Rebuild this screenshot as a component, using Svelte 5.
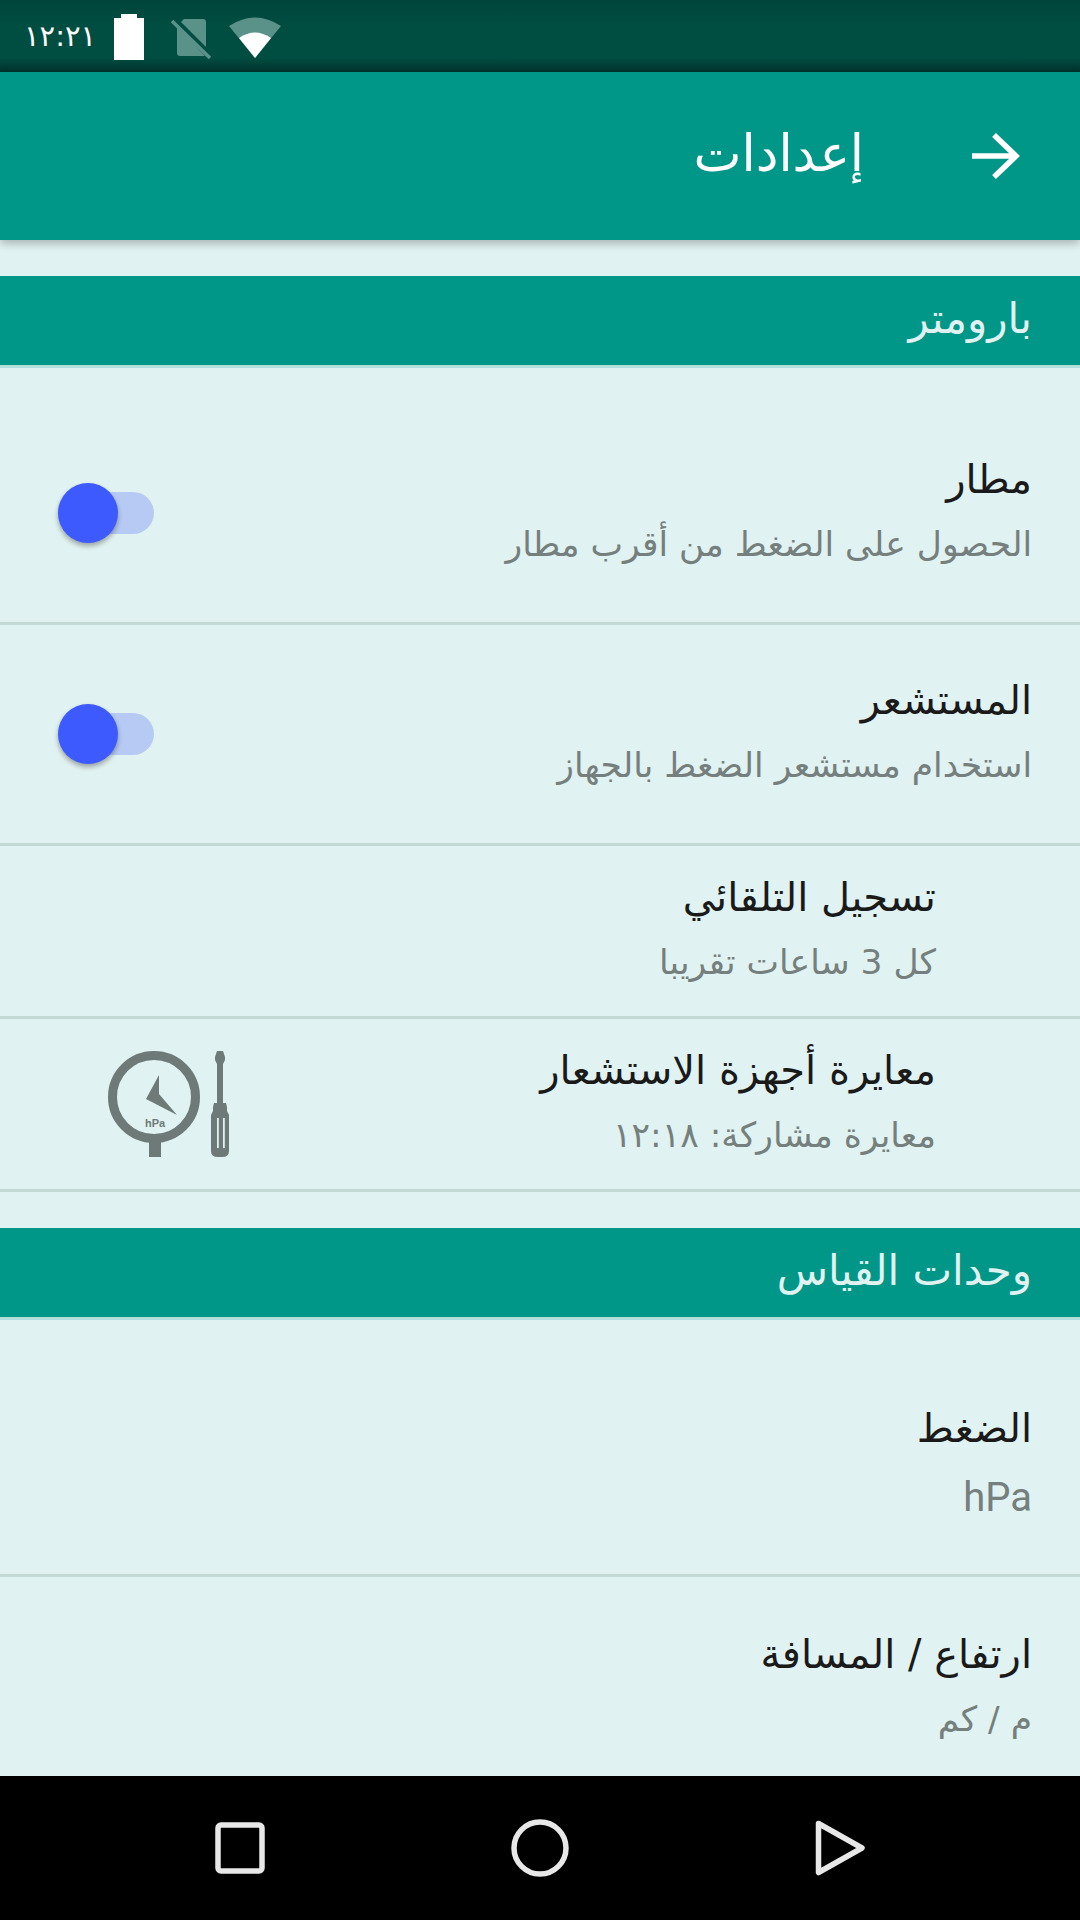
<script>
  const barometer = [
    { title: 'مطار', sub: 'الحصول على الضغط من أقرب مطار', kind: 'switch' },
    { title: 'المستشعر', sub: 'استخدام مستشعر الضغط بالجهاز', kind: 'switch' }
  ];
</script>

<div class="screen">
  <div class="status">
    <span class="time">١٢:٢١</span>
    <svg class="battery" width="30" height="46" viewBox="0 0 30 46"><path d="M7 0h16v4h7v42H0V4h7z" fill="#fff"/></svg>
    <svg class="sim" width="42" height="44" viewBox="0 0 42 44">
      <path d="M11 5l3-3h19a3 3 0 0 1 3 3v25z M7 9l28 30H10a3 3 0 0 1-3-3z" fill="#5a9189"/>
      <path d="M2 4l38 37" stroke="#5a9189" stroke-width="3.5"/>
    </svg>
    <svg class="wifi" width="52" height="44" viewBox="0 0 52 44">
      <path d="M0 10Q26-7 52 10L26 42z" fill="#5a9189"/>
      <path d="M10 22Q26 11 42 22L26 42z" fill="#fff"/>
    </svg>
  </div>

  <header class="toolbar" dir="rtl">
    <svg class="back" width="50" height="50" viewBox="0 0 50 50"><path d="M2 25h44M24 4l22 21-22 21" fill="none" stroke="#fff" stroke-width="5.5"/></svg>
    <h1>إعدادات</h1>
  </header>

  <main class="content" dir="rtl">
    <h2 class="section first">بارومتر</h2>
    {#each barometer as item}
      <div class="row tall">
        <div class="text">
          <div class="title">{item.title}</div>
          <div class="sub">{item.sub}</div>
        </div>
        <div class="switch"><span class="track"></span><span class="thumb"></span></div>
      </div>
    {/each}

    <div class="row short inset">
      <div class="text">
        <div class="title">تسجيل التلقائي</div>
        <div class="sub">كل 3 ساعات تقريبا</div>
      </div>
    </div>

    <div class="row short inset">
      <div class="text">
        <div class="title">معايرة أجهزة الاستشعار</div>
        <div class="sub">معايرة مشاركة: ١٢:١٨</div>
      </div>
      <svg class="gauge" width="180" height="150" viewBox="0 0 180 150" dir="ltr">
        <circle cx="74" cy="77" r="41.500" fill="none" stroke="#6d7a78" stroke-width="9"/>
        <rect x="69" y="122" width="12" height="15" fill="#6d7a78"/>
        <path d="M79 55L66 79 97 95 79 74z" fill="#6d7a78"/>
        <text x="75" y="107" text-anchor="middle" class="hpa">hPa</text>
        <path d="M137 31h6l2 6v3l-2 4v39h3l1 4v4l2 4v36q0 6-7 6h-4q-7 0-7-6V95l2-4v-4l1-4h3V44l-2-4v-3z" fill="#6d7a78"/>
        <path d="M137 98h1.800v30h-1.800zM143 98h1.800v30H143z" fill="#e0f2f1"/>
      </svg>
    </div>

    <h2 class="section second">وحدات القياس</h2>

    <div class="row tall">
      <div class="text">
        <div class="title">الضغط</div>
        <div class="sub latin">hPa</div>
      </div>
    </div>
    <div class="row tall last">
      <div class="text">
        <div class="title">ارتفاع / المسافة</div>
        <div class="sub">م / كم</div>
      </div>
    </div>
  </main>

  <nav class="navbar">
    <svg class="square" width="50" height="52" viewBox="0 0 50 52"><rect x="3" y="3" width="44" height="46" rx="3" fill="none" stroke="#e8e8e8" stroke-width="5.500"/></svg>
    <svg class="circle" width="58" height="58" viewBox="0 0 58 58"><circle cx="29" cy="29" r="26" fill="none" stroke="#e8e8e8" stroke-width="5.500"/></svg>
    <svg class="triangle" width="50" height="56" viewBox="0 0 50 56"><path d="M3.500 3.500L47 28 3.500 52.500z" fill="none" stroke="#e8e8e8" stroke-width="5.500" stroke-linejoin="round"/></svg>
  </nav>
</div>

<style>
  :global(body) {
    margin: 0;
    background: #e0f2f1;
  }
  .screen {
    width: 1080px;
    height: 1920px;
    display: flex;
    flex-direction: column;
    overflow: hidden;
    font-family: "DejaVu Sans", "Noto Sans", sans-serif;
    background: #e0f2f1;
  }
  .status {
    height: 72px;
    flex: none;
    display: flex;
    align-items: center;
    padding-left: 24px;
    box-sizing: border-box;
    background: linear-gradient(#00453b 0, #004d42 35%, #004d42 80%, #00332b 100%);
    color: #fff;
  }
  .time {
    font-size: 29px;
    width: 90px;
    line-height: 1;
  }
  .battery { margin-right: 26px; margin-top: 2px; }
  .sim { margin-right: 17px; margin-top: 5px; }
  .wifi { margin-top: 4px; }

  .toolbar {
    height: 168px;
    flex: none;
    display: flex;
    align-items: center;
    background: #009688;
    color: #fff;
    box-shadow: 0 3px 9px rgba(0, 0, 0, 0.28);
    position: relative;
    z-index: 1;
  }
  .back {
    margin-right: 60px;
  }
  h1 {
    margin: 0 106px 6px 0;
    font-size: 51px;
    font-weight: 400;
  }
  .content {
    flex: 1;
    min-height: 0;
    overflow: hidden;
  }
  .section {
    margin: 0;
    height: 92px;
    box-sizing: border-box;
    display: flex;
    align-items: center;
    padding: 0 48px 4px 0;
    background: #009688;
    border-bottom: 3px solid #b2dfdb;
    color: #e0f2f1;
    font-size: 42px;
    font-weight: 400;
  }
  .section.first { margin-top: 36px; }
  .section.second { margin-top: 36px; }

  .row {
    display: flex;
    align-items: center;
    justify-content: space-between;
    box-sizing: border-box;
    padding-right: 48px;
    border-bottom: 3px solid #c2d8d5;
  }
  .tall { height: 221px; }
  .section + .row { height: 257px; padding-top: 35px; }
  .short { height: 173px; }
  .inset { padding-right: 144px; }
  .last { border-bottom: none; }
  .text { padding-bottom: 5px; }
  .title {
    font-size: 40px;
    line-height: 56px;
    color: #1a1a1a;
  }
  .sub {
    font-size: 34.500px;
    line-height: 52px;
    margin-top: 11px;
    color: #757f7d;
  }
  .latin { font-family: Roboto, sans-serif; font-size: 40px; margin-top: 16px; }

  .switch {
    position: relative;
    width: 96px;
    height: 60px;
    margin-left: 58px;
    flex: none;
  }
  .track {
    position: absolute;
    inset: 9px 0;
    border-radius: 21px;
    background: #b6caf3;
  }
  .thumb {
    position: absolute;
    right: 36px;
    top: 0;
    width: 60px;
    height: 60px;
    border-radius: 50%;
    background: #3d5afe;
    box-shadow: 0 3px 5px rgba(0, 0, 0, 0.32);
  }
  .gauge {
    margin-left: 80px;
    margin-bottom: 18px;
    flex: none;
  }
  .hpa {
    font-family: "Liberation Sans", sans-serif;
    font-size: 11px;
    font-weight: 700;
    fill: #6d7a78;
  }
  .navbar {
    height: 144px;
    flex: none;
    background: #000;
    position: relative;
  }
  .navbar svg { position: absolute; }
  .square { left: 215px; top: 46px; }
  .circle { left: 511px; top: 43px; }
  .triangle { left: 815px; top: 44px; }
</style>
